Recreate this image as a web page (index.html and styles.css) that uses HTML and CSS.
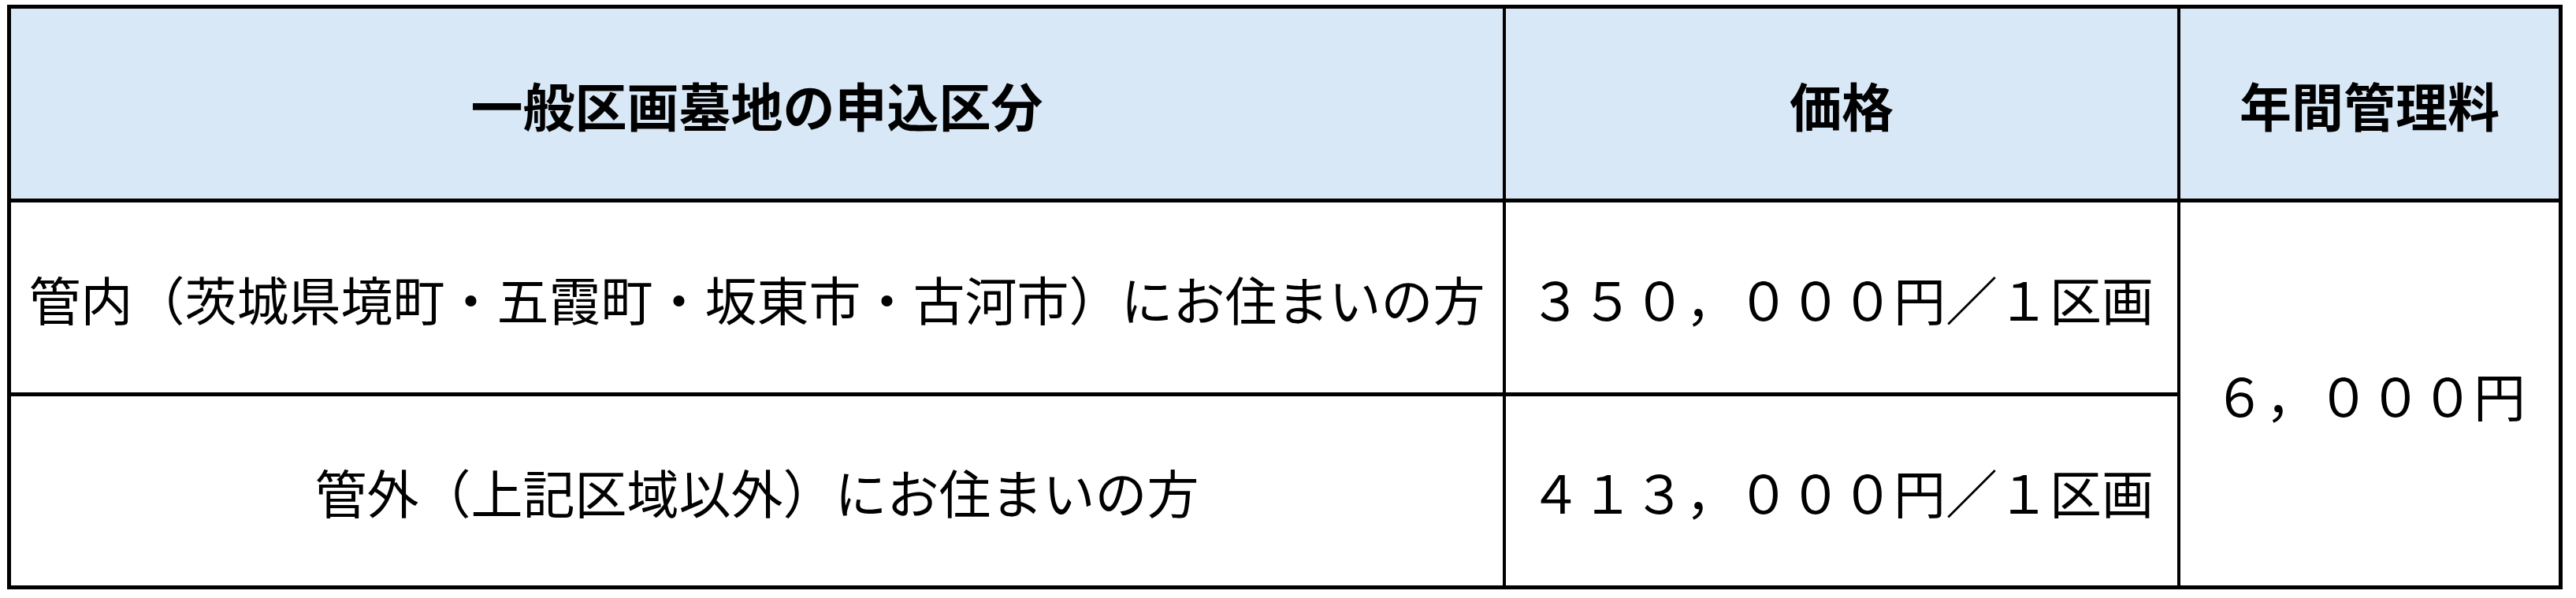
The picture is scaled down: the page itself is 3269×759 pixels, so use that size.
FILE: index.html
```html
<!DOCTYPE html>
<html lang="ja">
<head>
<meta charset="utf-8">
<title>一般区画墓地の申込区分</title>
<link rel="stylesheet" href="styles.css">
</head>
<body>
<div class="price-table">
  <div class="cell head">一般区画墓地の申込区分</div>
  <div class="cell head">価格</div>
  <div class="cell head">年間管理料</div>
  <div class="cell">管内（茨城県境町・五霞町・坂東市・古河市）にお住まいの方</div>
  <div class="cell">３５０，０００円／１区画</div>
  <div class="cell fee">６，０００円</div>
  <div class="cell">管外（上記区域以外）にお住まいの方</div>
  <div class="cell">４１３，０００円／１区画</div>
</div>
</body>
</html>
```

FILE: styles.css
```css
html, body {
  margin: 0;
  background: #ffffff;
}
body {
  padding: 6px 0 0 9px;
  font-family: "Noto Sans CJK JP", "Noto Sans", sans-serif;
  color: #000000;
}
.price-table {
  display: grid;
  grid-template-columns: 1893px 852px 480px;
  grid-template-rows: 241px 241px 240px;
  column-gap: 4px;
  row-gap: 5px;
  padding: 5px;
  width: max-content;
  background: #000000;
}
.cell {
  background: #ffffff;
  display: flex;
  align-items: center;
  justify-content: center;
  font-size: 66px;
  line-height: 1;
  white-space: nowrap;
  font-weight: 400;
}
.head {
  background: #d9e8f7;
  font-weight: 700;
}
.fee {
  grid-column: 3;
  grid-row: 2 / span 2;
}
```
